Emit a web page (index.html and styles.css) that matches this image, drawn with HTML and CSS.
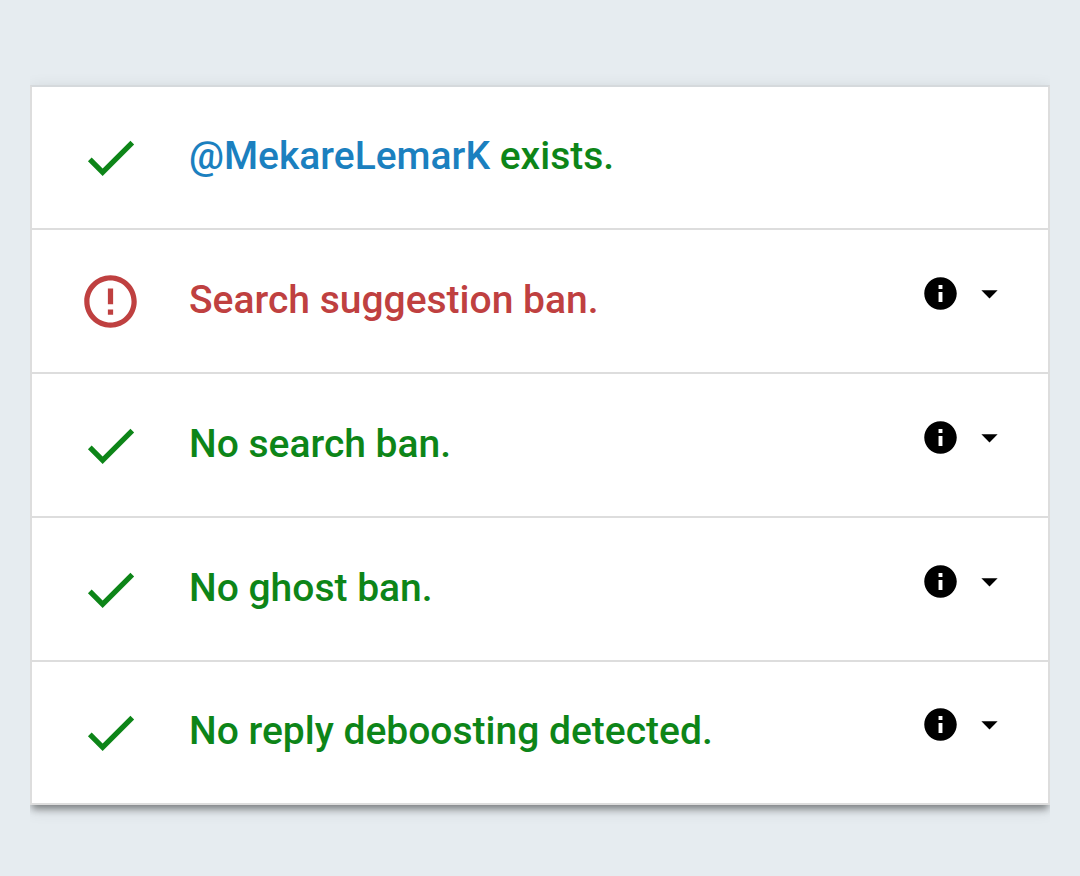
FILE: index.html
```html
<!DOCTYPE html>
<html lang="en">
<head>
    <meta charset="utf-8">
    <title>Shadowban Test</title>
    <link rel="stylesheet" href="styles.css">
</head>
<body>
    <svg class="sprite" aria-hidden="true">
        <symbol id="check" viewBox="0 0 24 24">
            <path d="M9 16.17 4.83 12l-1.42 1.41L9 19 21 7l-1.41-1.41z"/>
        </symbol>
        <symbol id="error" viewBox="0 0 24 24">
            <path d="M11 15h2v2h-2zm0-8h2v6h-2zm.99-5C6.47 2 2 6.48 2 12s4.47 10 9.99 10C17.52 22 22 17.52 22 12S17.52 2 11.99 2zM12 20c-4.42 0-8-3.58-8-8s3.58-8 8-8 8 3.58 8 8-3.58 8-8 8z"/>
        </symbol>
        <symbol id="info" viewBox="0 0 24 24">
            <path d="M12 2C6.48 2 2 6.48 2 12s4.48 10 10 10 10-4.48 10-10S17.52 2 12 2zm1.2 15.2h-2.4V11h2.4v6.2zm0-8h-2.4V6.8h2.4v2.4z"/>
        </symbol>
        <symbol id="arrow" viewBox="0 0 24 24">
            <path d="M7 10l5 5 5-5z"/>
        </symbol>
    </svg>

    <ul class="results">
        <li class="result ok">
            <svg class="status"><use href="#check"/></svg>
            <span class="label"><a href="#">@MekareLemarK</a> exists.</span>
        </li>
        <li class="result ban">
            <svg class="status"><use href="#error"/></svg>
            <span class="label">Search suggestion ban.</span>
            <button type="button" class="more" aria-label="More about search suggestion ban">
                <svg><use href="#info"/></svg>
                <svg><use href="#arrow"/></svg>
            </button>
        </li>
        <li class="result ok">
            <svg class="status"><use href="#check"/></svg>
            <span class="label">No search ban.</span>
            <button type="button" class="more" aria-label="More about search ban">
                <svg><use href="#info"/></svg>
                <svg><use href="#arrow"/></svg>
            </button>
        </li>
        <li class="result ok">
            <svg class="status"><use href="#check"/></svg>
            <span class="label">No ghost ban.</span>
            <button type="button" class="more" aria-label="More about ghost ban">
                <svg><use href="#info"/></svg>
                <svg><use href="#arrow"/></svg>
            </button>
        </li>
        <li class="result ok">
            <svg class="status"><use href="#check"/></svg>
            <span class="label">No reply deboosting detected.</span>
            <button type="button" class="more" aria-label="More about reply deboosting">
                <svg><use href="#info"/></svg>
                <svg><use href="#arrow"/></svg>
            </button>
        </li>
    </ul>
</body>
</html>
```
FILE: styles.css
```css
body {
    margin: 0;
    padding: 85px 30px 40px;
    background-color: #e6ecf0;
    font-family: Roboto, sans-serif;
}

.sprite {
    display: none;
}

.results {
    margin: 0;
    padding: 0;
    list-style: none;
    background-color: #fff;
    border: 2px solid #ddd;
    border-top-color: #d5d9dc;
    border-bottom: none;
    box-shadow: 0 6px 7px -2px rgba(0, 0, 0, 0.4), 0 4px 16px rgba(0, 0, 0, 0.12);
    /* keep the shadow above and below only */
    clip-path: inset(-30px 0);
}

.result {
    display: flex;
    align-items: center;
    height: 142px;
    padding: 0 39px 0 47px;
    border-bottom: 2px solid #ddd;
}

.result:first-child,
.result:last-child {
    height: 141px;
}

.status {
    width: 63px;
    height: 63px;
    margin-right: 47px;
    fill: currentColor;
}

.label {
    flex: 1;
    padding-bottom: 3px;
    font-size: 39px;
    line-height: 48px;
    font-weight: 500;
}

.label a {
    color: #1b80bf;
    text-decoration: none;
}

.ok {
    color: #0d8518;
}

.ban {
    color: #bf4040;
}

.more {
    display: flex;
    gap: 10px;
    padding: 0;
    margin-bottom: 16px;
    border: none;
    background: none;
    color: #000;
    cursor: pointer;
}

.more svg {
    width: 39px;
    height: 39px;
    fill: currentColor;
}
```
